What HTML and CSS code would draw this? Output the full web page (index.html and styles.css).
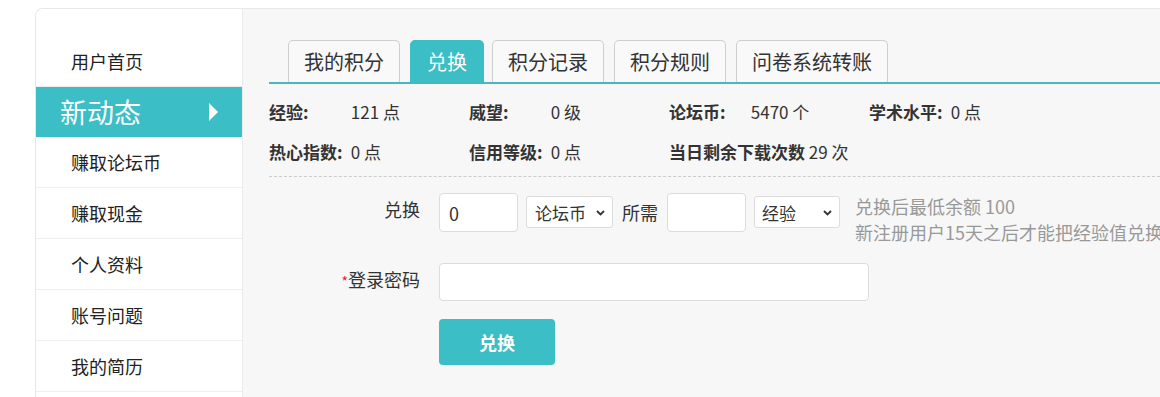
FILE: index.html
```html
<!DOCTYPE html>
<html lang="zh">
<head>
    <meta charset="UTF-8">
    <meta name="viewport" content="width=device-width, initial-scale=1.0">
    <title>积分兑换</title>
    <link rel="stylesheet" href="styles.css">
</head>
<body>
    <div class="page">
        <div class="frame">
            <ul class="side-nav">
                <li><a href="#">用户首页</a></li>
                <li class="active"><a href="#">新动态<span class="arrow"></span></a></li>
                <li><a href="#">赚取论坛币</a></li>
                <li><a href="#">赚取现金</a></li>
                <li><a href="#">个人资料</a></li>
                <li><a href="#">账号问题</a></li>
                <li><a href="#">我的简历</a></li>
            </ul>

            <div class="main">
                <div class="tabs">
                    <a class="tab" href="#">我的积分</a>
                    <a class="tab current" href="#">兑换</a>
                    <a class="tab" href="#">积分记录</a>
                    <a class="tab" href="#">积分规则</a>
                    <a class="tab" href="#">问卷系统转账</a>
                </div>

                <div class="stats">
                    <div class="stat"><b>经验:</b> 121 点</div>
                    <div class="stat"><b>威望:</b> 0 级</div>
                    <div class="stat"><b>论坛币:</b> 5470 个</div>
                    <div class="stat"><b>学术水平:</b> 0 点</div>
                    <div class="stat"><b>热心指数:</b> 0 点</div>
                    <div class="stat"><b>信用等级:</b> 0 点</div>
                    <div class="stat"><b>当日剩余下载次数</b> 29 次</div>
                </div>

                <form class="exchange-form" onsubmit="return false">
                    <div class="form-row">
                        <label class="form-label" for="amount">兑换</label>
                        <input class="text-input short" type="text" id="amount" value="0">
                        <span class="select-wrap">
                            <select class="select coin">
                                <option>论坛币</option>
                                <option>经验</option>
                            </select>
                            <svg class="chevron" width="9" height="6" viewBox="0 0 9 6"><path d="M1 1l3.5 3.5L8 1" fill="none" stroke="#333" stroke-width="1.8"/></svg>
                        </span>
                        <span class="inline-text">所需</span>
                        <input class="text-input short" type="text" id="need">
                        <span class="select-wrap">
                            <select class="select exp">
                                <option>经验</option>
                                <option>论坛币</option>
                            </select>
                            <svg class="chevron" width="9" height="6" viewBox="0 0 9 6"><path d="M1 1l3.5 3.5L8 1" fill="none" stroke="#333" stroke-width="1.8"/></svg>
                        </span>
                        <div class="hint">
                            兑换后最低余额 100<br>
                            新注册用户15天之后才能把经验值兑换成论坛币
                        </div>
                    </div>

                    <div class="form-row second">
                        <label class="form-label" for="password"><span class="required">*</span>登录密码</label>
                        <input class="text-input long" type="password" id="password">
                    </div>

                    <button class="submit-btn">兑换</button>
                </form>
            </div>
        </div>
    </div>
</body>
</html>
```

FILE: styles.css
```css
body {
    margin: 0;
    background: #fff;
    font-family: "Noto Sans CJK SC", "Open Sans", sans-serif;
    color: #333;
    overflow: hidden;
}
a {
    text-decoration: none;
    color: inherit;
}
.page {
    padding: 8px 0 0 35px;
}
.frame {
    display: flex;
    border: 1px solid #e8e8e8;
    border-right: none;
    border-bottom: none;
    border-radius: 8px 0 0 0;
    min-height: 400px;
    overflow: hidden;
}

/* left menu */
.side-nav {
    flex-shrink: 0;
    list-style: none;
    margin: 0;
    padding: 27px 0 0;
    width: 206px;
    background: #fff;
    border-right: 1px solid #ebebeb;
}
.side-nav li {
    height: 50px;
    border-bottom: 1px solid #eeeeee;
}
.side-nav li a {
    display: block;
    padding-left: 35px;
    font-size: 18px;
    line-height: 50px;
    color: #222;
}
.side-nav li.active {
    background: #3bbec5;
    border-bottom: none;
}
.side-nav li.active a {
    display: flex;
    align-items: center;
    justify-content: space-between;
    padding: 0 24px 0 24px;
    font-size: 27px;
    color: #fff;
}
.arrow {
    width: 0;
    height: 0;
    border-left: 9px solid #fff;
    border-top: 9px solid transparent;
    border-bottom: 9px solid transparent;
}

/* right side */
.main {
    flex: 1;
    min-width: 0;
    background: #f7f7f7;
    padding: 31px 0 0 26px;
}
.tabs {
    display: flex;
    padding-left: 19px;
    border-bottom: 2px solid #45b9bd;
}
.tab {
    margin-right: 10px;
    padding: 0 15px;
    height: 41px;
    line-height: 41px;
    font-size: 20px;
    color: #333;
    background: #f9f9f9;
    border: 1px solid #cfcfcf;
    border-bottom: none;
    border-radius: 5px 5px 0 0;
}
.tab.current {
    padding: 0 16px;
    background: #3bbec5;
    border-color: #3bbec5;
    color: #fff;
    margin-right: 8px;
}

.stats {
    display: grid;
    grid-template-columns: repeat(4, 200px);
    margin-top: 8px;
    padding-bottom: 4px;
    border-bottom: 1px dashed #cccccc;
}
.stat {
    height: 40px;
    line-height: 40px;
    font-size: 17px;
    white-space: nowrap;
}
.stat b {
    display: inline-block;
    min-width: 78px;
    color: #333;
}

/* form */
.exchange-form {
    padding-top: 16px;
}
.form-row {
    display: flex;
    align-items: flex-start;
    font-size: 18px;
    white-space: nowrap;
}
.form-row > * {
    flex-shrink: 0;
}
.form-row.second {
    margin-top: 18px;
}
.form-label {
    width: 151px;
    margin-right: 19px;
    text-align: right;
    line-height: 33px;
    color: #333;
}
.required {
    color: #e0262a;
    font-size: 14px;
}
.text-input {
    box-sizing: border-box;
    height: 39px;
    padding: 0 9px;
    font-size: 18px;
    font-family: inherit;
    color: #333;
    background: #fff;
    border: 1px solid #dcdcdc;
    border-radius: 4px;
    outline: none;
}
.text-input.short {
    width: 79px;
}
.text-input.long {
    width: 430px;
    height: 38px;
}
.select-wrap {
    position: relative;
    margin: 3px 0 0 8px;
}
.select {
    box-sizing: border-box;
    height: 32px;
    padding: 0 0 0 8px;
    font-size: 17px;
    font-family: inherit;
    color: #333;
    background: #fff;
    border: 1px solid #dcdcdc;
    border-radius: 3px;
    appearance: none;
    -webkit-appearance: none;
    outline: none;
}
.select.coin {
    width: 87px;
}
.select.exp {
    width: 86px;
    padding-left: 7px;
}
.chevron {
    position: absolute;
    right: 8px;
    top: 14px;
    pointer-events: none;
}
.inline-text {
    margin: 0 9px;
    line-height: 39px;
}
.hint {
    margin-left: 15px;
    line-height: 26px;
    color: #999;
}
.submit-btn {
    display: block;
    margin: 18px 0 0 170px;
    width: 116px;
    height: 46px;
    font-size: 18px;
    font-weight: bold;
    font-family: inherit;
    color: #fff;
    background: #3bbec5;
    border: none;
    border-radius: 4px;
    cursor: pointer;
}
.submit-btn:hover {
    background: #35b1b8;
}
```
